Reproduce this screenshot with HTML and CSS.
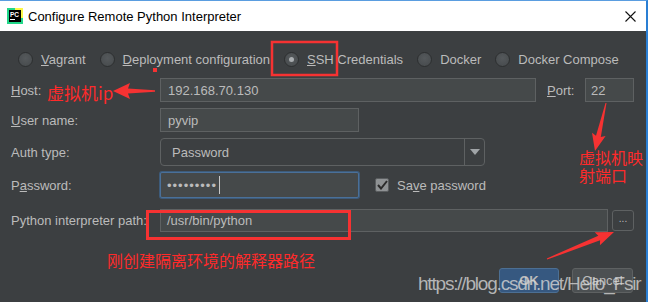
FILE: index.html
```html
<!DOCTYPE html>
<html lang="en">
<head>
    <meta charset="UTF-8">
    <title>Configure Remote Python Interpreter</title>
    <link rel="stylesheet" href="styles.css">
</head>
<body>
    <div class="window">
        <header class="titlebar">
            <svg class="app-icon" width="16" height="16" viewBox="0 0 16 16">
                <rect x="0" y="0" width="16" height="16" fill="#21d789"/>
                <rect x="8" y="0" width="8" height="10" fill="#fcf84a"/>
                <rect x="2" y="2" width="12" height="12" fill="#000"/>
                <text x="3" y="9" font-family="Liberation Sans, sans-serif" font-size="6.5" font-weight="bold" fill="#fff">PC</text>
                <rect x="3" y="11" width="5" height="1" fill="#fff"/>
            </svg>
            <span class="title">Configure Remote Python Interpreter</span>
            <svg class="close" width="11" height="11" viewBox="0 0 11 11">
                <path d="M0.5 0.5 L10.5 10.5 M10.5 0.5 L0.5 10.5" stroke="#111" stroke-width="1.1"/>
            </svg>
        </header>

        <main class="dialog">
            <div class="radios">
                <label class="radio"><span class="radio-dot"></span><span><u>V</u>agrant</span></label>
                <label class="radio"><span class="radio-dot"></span><span><u>D</u>eployment configuration</span></label>
                <label class="radio"><span class="radio-dot checked"></span><span><u>S</u>SH Credentials</span></label>
                <label class="radio"><span class="radio-dot"></span><span>Docker</span></label>
                <label class="radio"><span class="radio-dot"></span><span>Docker Compose</span></label>
            </div>

            <div class="row row-host">
                <span class="label"><u>H</u>ost:</span>
                <div class="field field-host">192.168.70.130</div>
                <span class="label-port"><u>P</u>ort:</span>
                <div class="field field-port">22</div>
            </div>

            <div class="row row-user">
                <span class="label"><u>U</u>ser name:</span>
                <div class="field field-short">pyvip</div>
            </div>

            <div class="row row-auth">
                <span class="label">Auth type:</span>
                <div class="select">
                    <span class="select-value">Password</span>
                    <span class="select-arrow"></span>
                </div>
            </div>

            <div class="row row-pass">
                <span class="label">P<u>a</u>ssword:</span>
                <div class="field field-short focused">
                    <span class="dots">•••••••••</span><span class="caret"></span>
                </div>
                <label class="check"><span class="check-box">
                    <svg width="11" height="10" viewBox="0 0 11 10"><path d="M1 5 L4 8.5 L10 1" fill="none" stroke="#2b2b2b" stroke-width="2"/></svg>
                </span><span>Sa<u>v</u>e password</span></label>
            </div>

            <div class="row row-path">
                <span class="label">Python interpreter path:</span>
                <div class="field field-path">/usr/bin/python</div>
                <div class="browse">...</div>
            </div>

            <div class="buttons">
                <div class="btn btn-ok">OK</div>
                <div class="btn">Cancel</div>
            </div>
        </main>

        <div class="watermark">https://blog.csdn.net/Hello_Fsir</div>

        <svg class="marks" width="648" height="302" viewBox="0 0 648 302">
            <rect x="272" y="42" width="65" height="33" fill="none" stroke="#f63232" stroke-width="2.5"/>
            <rect x="153" y="68" width="4" height="4" fill="#f63232"/>
            <rect x="147.5" y="211.5" width="202" height="27" fill="none" stroke="#f63232" stroke-width="3"/>
            <polygon fill="#f63232" points="155,90.3 128,88.5 130,83 113,91 130,99 128,93.5 155,91.7"/>
            <polygon fill="#f63232" points="606.5,103.1 600.8,137 605.6,136 595,151 592,132.8 596,135.8 605.5,102.9"/>
            <polygon fill="#f63232" points="547.2,259.6 600.1,240.3 599.9,245.2 614,232 594.7,232.2 598.3,235.7 546.8,258.4"/>
        </svg>

        <div class="note note-ip">虚拟机ip</div>
        <div class="note note-port">虚拟机映<br>射端口</div>
        <div class="note note-path">刚创建隔离环境的解释器路径</div>
    </div>
</body>
</html>
```

FILE: styles.css
```css
* {
    margin: 0;
    padding: 0;
    box-sizing: border-box;
}

body {
    font-family: "Liberation Sans", Arial, sans-serif;
    font-size: 13px;
    background-color: #3c3f41;
    width: 648px;
    height: 302px;
    overflow: hidden;
}

.window {
    position: relative;
    width: 648px;
    height: 302px;
    background-color: #3c3f41;
    border-right: 2px solid #2a7fd4;
    border-top: 1px solid #5a9de0;
}

.titlebar {
    height: 30px;
    background-color: #fff;
    display: flex;
    align-items: center;
    padding-left: 7px;
}

.app-icon {
    margin-right: 5px;
}

.title {
    color: #000;
    font-size: 13px;
    flex: 1;
}

.close {
    margin-right: 10px;
}

.dialog {
    padding: 19px 11px 0 11px;
    color: #bbbbbb;
}

.radios {
    display: flex;
    align-items: center;
    height: 18px;
    padding-left: 7px;
    gap: 14px;
    white-space: nowrap;
}

.radio {
    display: flex;
    align-items: center;
    gap: 8px;
}

.radio-dot {
    width: 15px;
    height: 15px;
    flex-shrink: 0;
    border-radius: 50%;
    background: radial-gradient(circle at 50% 40%, #55595c, #45494b);
    border: 1px solid #2d2f30;
    display: flex;
    align-items: center;
    justify-content: center;
}

.radio-dot.checked::after {
    content: "";
    width: 5px;
    height: 5px;
    border-radius: 50%;
    background-color: #a9adb0;
}

.row {
    display: flex;
    align-items: center;
}

.label {
    width: 149px;
}

.row-host {
    margin-top: 10px;
    height: 24px;
}

.row-user {
    margin-top: 6px;
    height: 24px;
}

.row-auth {
    margin-top: 6px;
    height: 28px;
}

.row-pass {
    margin-top: 6px;
    height: 26px;
}

.row-path {
    margin-top: 11px;
    height: 23px;
}

.field {
    height: 100%;
    background-color: #45494a;
    border: 1px solid #5e6162;
    color: #bbbbbb;
    padding-left: 7px;
    display: flex;
    align-items: center;
}

.field-host {
    width: 376px;
}

.label-port {
    margin-left: 11px;
    width: 38px;
}

.field-port {
    width: 49px;
    padding-left: 5px;
}

.field-short {
    width: 199px;
}

.focused {
    border: 1px solid #4a7099;
    box-shadow: 0 0 0 1px #3d5b7a;
    border-radius: 2px;
    padding-left: 6px;
}

.dots {
    font-size: 13px;
    letter-spacing: 1px;
}

.caret {
    width: 1px;
    height: 18px;
    background-color: #c8c8c8;
    margin-left: 2px;
}

.select {
    width: 325px;
    height: 100%;
    background-color: #3c3f41;
    border: 1px solid #5e6162;
    border-radius: 4px;
    display: flex;
    align-items: stretch;
}

.select-value {
    flex: 1;
    padding-left: 11px;
    display: flex;
    align-items: center;
}

.select-arrow {
    width: 20px;
    border-left: 1px solid #5e6162;
    display: flex;
    align-items: center;
    justify-content: center;
}

.select-arrow::after {
    content: "";
    border-left: 5px solid transparent;
    border-right: 5px solid transparent;
    border-top: 6px solid #a0a4a7;
}

.check {
    display: flex;
    align-items: center;
    gap: 8px;
    margin-left: 16px;
}

.check-box {
    width: 14px;
    height: 14px;
    background-color: #8f9294;
    border: 1px solid #5a5d5f;
    border-radius: 2px;
    display: flex;
    align-items: center;
    justify-content: center;
}

.field-path {
    width: 448px;
    padding-left: 6px;
}

.browse {
    width: 22px;
    height: 21px;
    margin-left: 4px;
    border: 1px solid #5e6162;
    border-radius: 3px;
    background-color: #3c3f41;
    font-size: 10px;
    display: flex;
    align-items: center;
    justify-content: center;
    padding-bottom: 4px;
}

.buttons {
    display: flex;
    justify-content: flex-end;
    gap: 13px;
    margin-top: 36px;
    padding-right: 2px;
}

.btn {
    width: 61px;
    height: 25px;
    border: 1px solid #5e6162;
    border-radius: 3px;
    background-color: #4c5052;
    display: flex;
    align-items: center;
    justify-content: center;
}

.btn-ok {
    width: 60px;
    background-color: #365880;
    border-color: #4c6f93;
    font-weight: bold;
}

.watermark {
    position: absolute;
    left: 418px;
    top: 272px;
    font-family: "Liberation Sans", Arial, sans-serif;
    font-size: 19px;
    letter-spacing: -1.2px;
    color: rgba(215, 215, 215, 0.78);
    white-space: nowrap;
}

.marks {
    position: absolute;
    left: 0;
    top: -1px;
}

.note {
    position: absolute;
    font-family: "Noto Sans CJK SC", sans-serif;
    color: #ff2a2a;
    font-size: 16px;
    line-height: 18px;
}

.note-ip {
    left: 47px;
    top: 83px;
    font-size: 17px;
}

.note-port {
    left: 579px;
    top: 147px;
}

.note-path {
    left: 107px;
    top: 250px;
}
```
